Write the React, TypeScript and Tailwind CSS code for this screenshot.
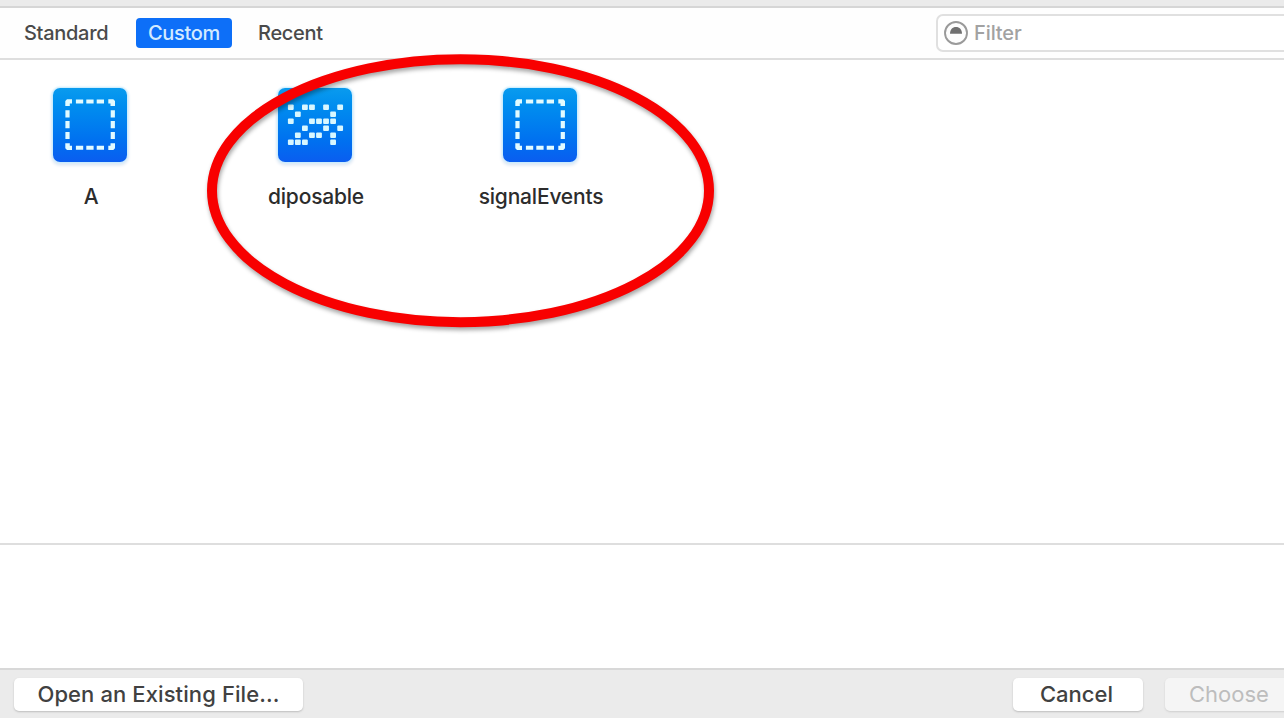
import React from "react";

const pixels: number[][] = [
  [0, 2, 3, 5, 7],
  [1, 6],
  [0, 3, 4, 5, 6],
  [2, 5, 7],
  [1, 3, 4, 6],
  [0, 1, 2, 6],
];

function TemplateIcon({ kind }: { kind: "outline" | "pixels" }) {
  return (
    <div className="h-[74px] w-[74px] rounded-[7px] bg-linear-to-b from-[#0a9bee] to-[#0b5df0] shadow-[0_0_2px_1px_#c4ecff,0_2px_3px_2px_#e4ecf6]">
      <svg viewBox="0 0 74 74" className="h-full w-full">
        {kind === "outline" ? (
          <g fill="#e2fbff">
            <path d="M12.3 18V13l1.7-1.7h5v4.2h-2.2V18zM62 18V13l-1.7-1.7h-5v4.2h2.2V18zM12.3 55.2v5l1.7 1.7h5v-4.2h-2.2v-2.5zM62 55.2v5l-1.7 1.7h-5v-4.2h2.2v-2.5z" />
            <path d="M22.9 11.6h7.3v4h-7.3zM33.3 11.6h7.3v4h-7.3zM43.7 11.6H51v4h-7.3zM22.9 57.8h7.3v4h-7.3zM33.3 57.8h7.3v4h-7.3zM43.7 57.8H51v4h-7.3z" />
            <path d="M12.4 22.2h4.2v7.2h-4.2zM12.4 33h4.2v7.2h-4.2zM12.4 43.9h4.2v7.2h-4.2zM57.7 22.2h4.2v7.2h-4.2zM57.7 33h4.2v7.2h-4.2zM57.7 43.9h4.2v7.2h-4.2z" />
          </g>
        ) : (
          pixels.map((row, y) =>
            row.map((x) => (
              <rect
                key={`${x}-${y}`}
                x={9.9 + x * 7.05}
                y={16.5 + y * 7}
                width="5.8"
                height="5.6"
                rx="1"
                fill="#d8f7ff"
              />
            )),
          )
        )}
      </svg>
    </div>
  );
}

function Template({ name, kind }: { name: string; kind: "outline" | "pixels" }) {
  return (
    <div className="flex w-[225px] shrink-0 flex-col items-center">
      <TemplateIcon kind={kind} />
      <span className="mt-[20px] pl-[3px] text-[21px] leading-[30px] font-medium tracking-[-0.2px] whitespace-nowrap text-[#2c2c2c]">
        {name}
      </span>
    </div>
  );
}

export default function App() {
  return (
    <div className="relative flex h-[718px] w-[1284px] flex-col overflow-hidden bg-white font-[Inter,sans-serif]">
      <div className="h-[8px] shrink-0 border-b-2 border-[#d6d6d6] bg-[#ebebeb]" />
      <header className="flex h-[52px] shrink-0 items-center border-b-2 border-[#dedede] bg-[#fefefe] text-[20px] font-[450] text-[#4a4a4a]">
        <span className="ml-[24px] w-[112px] tracking-[-0.3px] whitespace-nowrap">Standard</span>
        <span className="flex h-[30px] w-[96px] items-center justify-center rounded-[4px] bg-[#0d6ff8] tracking-[-0.3px] text-[#d3eaff]">
          Custom
        </span>
        <span className="ml-[26px] tracking-[-0.3px]">Recent</span>
        <div className="-mr-2 ml-auto flex h-[38px] w-[356px] items-center rounded-[7px] border-2 border-[#e0e0e0] bg-white pl-[5px]">
          <svg viewBox="0 0 26 26" className="h-[26px] w-[26px]">
            <circle cx="13" cy="13" r="11" fill="#fdfdfd" stroke="#9a9a9a" strokeWidth="1.9" />
            <path d="M7 13.7C7 9.5 9.5 7 13 7s6 2.500 6 6.700z" fill="#707070" />
          </svg>
          <span className="ml-[5px] tracking-[-0.1px] text-[#a2a2a2]">Filter</span>
        </div>
      </header>
      <main className="flex h-[485px] shrink-0 items-start border-b-2 border-[#dedede] pt-[28px]">
        <div className="-ml-[23px] flex">
          <Template name="A" kind="outline" />
          <Template name="diposable" kind="pixels" />
          <Template name="signalEvents" kind="outline" />
        </div>
      </main>
      <section className="grow bg-white" />
      <footer className="flex h-[50px] shrink-0 items-start border-t-2 border-[#d8d8d8] bg-[#ebebeb] pt-[8px] text-[22px] text-[#414141]">
        <button className="ml-[14px] flex h-[33px] w-[289px] items-center justify-center rounded-[5px] bg-white font-[450] tracking-[0.1px] whitespace-nowrap shadow-[0_1px_2px_#bdbdbd]">
          Open an Existing File...
        </button>
        <button className="ml-auto flex h-[33px] w-[130px] items-center justify-center rounded-[5px] bg-white pr-[3px] font-medium shadow-[0_1px_2px_#bdbdbd]">
          Cancel
        </button>
        <button className="-mr-2 ml-[22px] flex h-[33px] w-[127px] items-center rounded-[5px] bg-[#f5f5f5] pl-[24px] text-[#bdbdbd] shadow-[0_1px_2px_#cfcfcf]">
          Choose
        </button>
      </footer>
      <svg
        viewBox="0 0 1284 718"
        className="pointer-events-none absolute inset-0 h-full w-full [filter:drop-shadow(1px_3px_2px_rgba(0,0,0,0.35))]"
      >
        <ellipse cx="460.500" cy="190.700" rx="248.500" ry="131.500" fill="none" stroke="#f80000" strokeWidth="10" />
      </svg>
    </div>
  );
}
